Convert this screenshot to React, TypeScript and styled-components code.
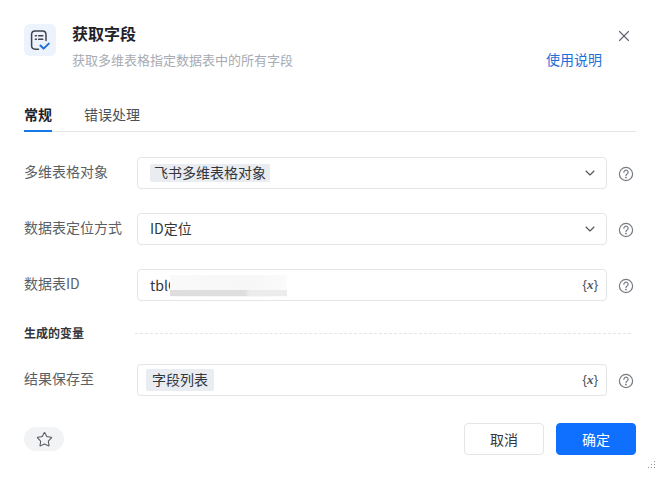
import React from "react";
import styled, { createGlobalStyle } from "styled-components";
import { X, ChevronDown, Star } from "lucide-react";

const Global = createGlobalStyle`
  html, body { margin: 0; padding: 0; background: #fff; }
  body { font-family: "Noto Sans CJK SC", "Noto Sans", sans-serif; width: 660px; height: 479px; overflow: hidden; }
`;

const Dialog = styled.div`
  position: relative;
  box-sizing: border-box;
  width: 660px;
  height: 479px;
  padding: 24px 24px 0;
  background: #fff;
`;

const Header = styled.header`
  display: flex;
  height: 50px;
`;

const HeaderIcon = styled.div`
  width: 32px;
  height: 32px;
  border-radius: 6px;
  background: #edf3fd;
  display: flex;
  align-items: center;
  justify-content: center;
  flex: none;
`;

const HeaderText = styled.div`
  margin-left: 16px;
  margin-top: -2px;
  display: flex;
  flex-direction: column;
`;

const Title = styled.h1`
  margin: 0;
  font-size: 16px;
  line-height: 22px;
  font-weight: 700;
  color: #1f2329;
`;

const Subtitle = styled.p`
  margin: 6px 0 0;
  font-size: 13px;
  line-height: 20px;
  color: #a8abb2;
`;

const HelpLink = styled.a`
  margin-left: auto;
  margin-right: 34px;
  margin-top: 25px;
  font-size: 14px;
  line-height: 20px;
  height: 20px;
  color: #1f6fd8;
`;

const CloseButton = styled.button`
  position: absolute;
  top: 27px;
  right: 27px;
  width: 18px;
  height: 18px;
  padding: 0;
  border: 0;
  background: none;
  color: #5f636b;
  display: flex;
`;

const Tabs = styled.nav`
  display: flex;
  gap: 32px;
  margin-top: 20px;
  height: 37px;
  width: 612px;
  border-bottom: 1px solid #e3e5e9;
`;

const Tab = styled.div<{ $active?: boolean }>`
  position: relative;
  font-size: 14px;
  line-height: 22px;
  padding-top: 9px;
  color: ${(p) => (p.$active ? "#1f2329" : "#4b4f56")};
  font-weight: ${(p) => (p.$active ? 700 : 400)};
  ${(p) =>
    p.$active &&
    `&::after {
      content: "";
      position: absolute;
      left: 0;
      right: 0;
      bottom: -1px;
      height: 2px;
      background: #1677e8;
    }`}
`;

const Form = styled.div`
  display: flex;
  flex-direction: column;
  margin-top: 25px;
`;

const Row = styled.div<{ $gap?: number }>`
  display: flex;
  align-items: center;
  height: 32px;
  margin-bottom: ${(p) => p.$gap ?? 24}px;
`;

const Label = styled.label`
  width: 113px;
  flex: none;
  font-size: 14px;
  line-height: 20px;
  margin-top: -5px;
  color: #5c5f66;
`;

const Field = styled.div`
  box-sizing: border-box;
  position: relative;
  width: 470px;
  height: 32px;
  flex: none;
  border: 1px solid #e3e5e9;
  border-radius: 4px;
  display: flex;
  align-items: center;
  padding: 0 8px 0 12px;
  background: #fff;
  font-size: 14px;
  color: #33363c;
`;

const PlainValue = styled.span`
  margin-top: -2px;
`;

const Tag = styled.span<{ $compact?: boolean }>`
  background: #e9ecf1;
  border-radius: 2px;
  height: ${(p) => (p.$compact ? 18 : 22)}px;
  line-height: ${(p) => (p.$compact ? 16 : 20)}px;
  padding: 0 ${(p) => (p.$compact ? 4 : 6)}px;
  margin-left: ${(p) => (p.$compact ? 0 : -4)}px;
  color: #33363c;
  font-size: 14px;
`;

const Trail = styled.span`
  margin-left: auto;
  display: flex;
  align-items: center;
  color: #4f5259;
`;

const VarMark = styled.span`
  margin-left: auto;
  font-family: "Liberation Sans", sans-serif;
  font-size: 13px;
  line-height: 16px;
  letter-spacing: -0.2px;
  color: #4f5259;

  i {
    font-family: "Liberation Serif", serif;
    font-size: 13px;
    font-weight: 700;
    padding: 0 0.5px;
  }
`;

const Clipped = styled.span`
  color: #33363c;
`;

const Blurred = styled.div`
  position: absolute;
  left: 32px;
  top: 5px;
  width: 117px;
  height: 22px;
  background:
    linear-gradient(90deg, #dedede 0, #dedede 64%, #ececec 68%, #ececec 100%) 0 15px / 100% 6px no-repeat,
    linear-gradient(90deg, #f9f9f9, #f7f7f7 70%, #fbfbfb);
`;

const Hint = styled.span`
  margin-left: 11px;
  margin-top: 2px;
  width: 16px;
  height: 16px;
  display: flex;
  color: #787b82;
`;

const Section = styled.div`
  display: flex;
  align-items: center;
  height: 20px;
  margin: -4px 0 21px;
`;

const SectionTitle = styled.span`
  font-size: 12px;
  line-height: 20px;
  font-weight: 700;
  color: #33363c;
  flex: none;
`;

const Dashed = styled.span`
  margin-left: 51px;
  margin-top: 1px;
  width: 496px;
  border-top: 1px dashed #e3e5e9;
`;

const Footer = styled.footer`
  display: flex;
  align-items: center;
  margin-top: -3px;
  width: 612px;
  gap: 12px;
`;

const FavButton = styled.button`
  width: 40px;
  height: 24px;
  border: 0;
  border-radius: 12px;
  background: #f2f3f5;
  color: #55585f;
  padding: 0;
  margin-right: auto;
  display: flex;
  align-items: center;
  justify-content: center;
`;

const Button = styled.button<{ $primary?: boolean }>`
  box-sizing: border-box;
  width: 80px;
  height: 32px;
  border-radius: 4px;
  border: 1px solid ${(p) => (p.$primary ? "#0f6fff" : "#e3e5e9")};
  background: ${(p) => (p.$primary ? "#0f6fff" : "#fff")};
  color: ${(p) => (p.$primary ? "#fff" : "#33363c")};
  font-family: inherit;
  font-size: 14px;
  padding: 0;
`;

const Grip = styled.svg`
  position: absolute;
  right: 4px;
  bottom: 8px;
`;

const Question = () => (
  <svg width="16" height="16" viewBox="0 0 16 16" fill="none" stroke="currentColor" strokeWidth="1.2" strokeLinecap="round">
    <circle cx="8" cy="8" r="6.6" />
    <path d="M5.9 6.3a2.1 2.1 0 1 1 3.2 1.8c-.7.4-1.1.8-1.1 1.6" />
    <circle cx="8" cy="11.6" r=".35" fill="currentColor" />
  </svg>
);

const TableIcon = () => (
  <svg width="24" height="24" viewBox="0 0 24 24" fill="none">
    <path d="M10.5 21.2H7.2c-2.2 0-3.6-1.5-3.6-3.6V6.6C3.6 4.4 5 3 7.2 3h7.2c2.2 0 3.6 1.4 3.6 3.6v6" stroke="#3f4550" strokeWidth="1.5" strokeLinecap="round" />
    <path d="M7.4 7.8h1M10.6 7.8h4.2M7.4 11.3h1M10.6 11.3h4.2" stroke="#3f4550" strokeWidth="1.5" strokeLinecap="round" />
    <path d="M12.4 17.6l3.2 3 5.2-5" stroke="#1f6fd8" strokeWidth="2" strokeLinecap="round" strokeLinejoin="round" />
  </svg>
);

const Chevron = () => (
  <Trail>
    <ChevronDown size={16} strokeWidth={1.6} />
  </Trail>
);

const Help = () => (
  <Hint>
    <Question />
  </Hint>
);

const Variable = () => (
  <VarMark>
    {"{"}
    <i>x</i>
    {"}"}
  </VarMark>
);

export default function App() {
  return (
    <>
      <Global />
      <Dialog>
        <Header>
          <HeaderIcon>
            <TableIcon />
          </HeaderIcon>
          <HeaderText>
            <Title>获取字段</Title>
            <Subtitle>获取多维表格指定数据表中的所有字段</Subtitle>
          </HeaderText>
          <HelpLink>使用说明</HelpLink>
        </Header>
        <CloseButton aria-label="关闭">
          <X size={18} strokeWidth={1.5} />
        </CloseButton>
        <Tabs>
          <Tab $active>常规</Tab>
          <Tab>错误处理</Tab>
        </Tabs>
        <Form>
          <Row>
            <Label>多维表格对象</Label>
            <Field>
              <Tag $compact>飞书多维表格对象</Tag>
              <Chevron />
            </Field>
            <Help />
          </Row>
          <Row>
            <Label>数据表定位方式</Label>
            <Field>
              <PlainValue>ID定位</PlainValue>
              <Chevron />
            </Field>
            <Help />
          </Row>
          <Row $gap={26}>
            <Label>数据表ID</Label>
            <Field>
              <Clipped>tblC</Clipped>
              <Blurred />
              <Variable />
            </Field>
            <Help />
          </Row>
          <Section>
            <SectionTitle>生成的变量</SectionTitle>
            <Dashed />
          </Section>
          <Row $gap={30}>
            <Label>结果保存至</Label>
            <Field>
              <Tag>字段列表</Tag>
              <Variable />
            </Field>
            <Help />
          </Row>
        </Form>
        <Footer>
          <FavButton aria-label="收藏">
            <Star size={17} strokeWidth={1.5} />
          </FavButton>
          <Button>取消</Button>
          <Button $primary>确定</Button>
        </Footer>
        <Grip width="10" height="10" viewBox="0 0 10 10" fill="#8d9096">
          <rect x="8" y="0" width="1" height="1" />
          <rect x="8" y="3" width="1" height="1" />
          <rect x="5" y="3" width="1" height="1" />
          <rect x="8" y="6" width="1" height="1" />
          <rect x="5" y="6" width="1" height="1" />
          <rect x="2" y="6" width="1" height="1" />
        </Grip>
      </Dialog>
    </>
  );
}
